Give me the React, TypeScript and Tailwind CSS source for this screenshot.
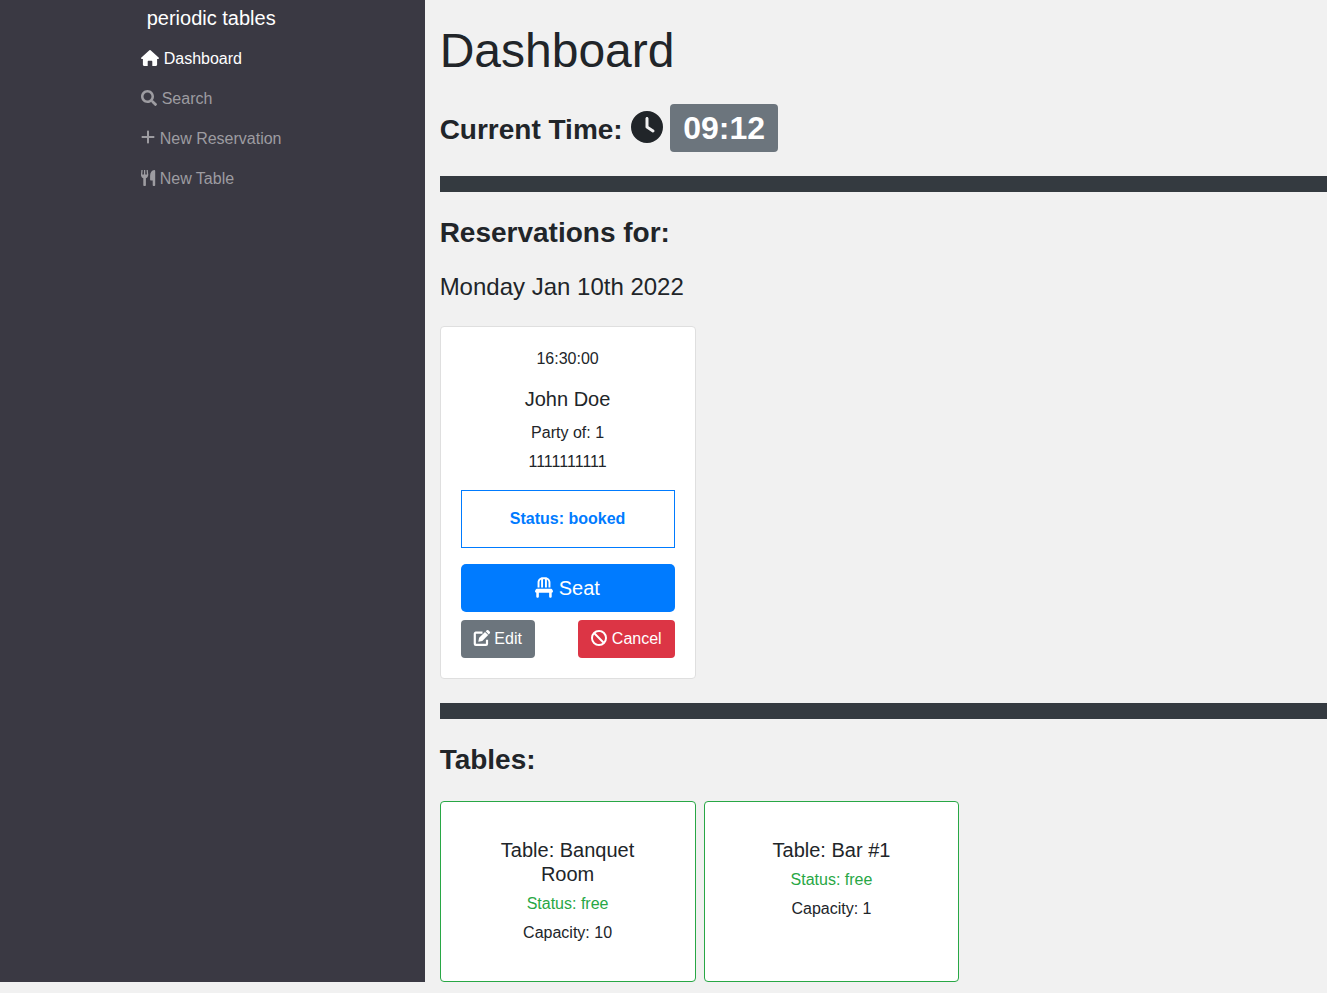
import { FaPlus, FaClock, FaChair, FaBan } from "react-icons/fa6";
import { FaSearch } from "react-icons/fa";
import type { ReactNode } from "react";

function HouseIcon() {
  return (
    <svg viewBox="0 0 18 16" className="h-4 w-[18px]" fill="currentColor">
      <path d="M8.4.3a1 1 0 0 1 1.2 0l8 7.1c.8.7.3 1.6-.6 1.6h-.9v5.8c0 .7-.5 1.2-1.2 1.2h-3.6v-4.2c0-.6-.4-1-1-1H7.7c-.6 0-1 .4-1 1V16H3.1c-.7 0-1.2-.5-1.2-1.2V9H1C.1 9-.4 8.100.4 7.400Z" />
    </svg>
  );
}

function UtensilsIcon() {
  return (
    <svg viewBox="0 0 15 16" className="-mr-px h-4 w-[15px]" fill="none" stroke="currentColor">
      <path d="M1 .3 .6 5M3.600.3V6M6.200.3 6.600 5" strokeWidth="1.300" strokeLinecap="round" />
      <path d="M0 4.500h7.200c0 2-.8 3.300-2.300 3.800V15c0 .6-.4 1-1 1h-.6c-.6 0-1-.4-1-1V8.300C.8 7.800 0 6.500 0 4.500Z" fill="currentColor" stroke="none" />
      <path d="M13.300 0c.6 0 .9.4.9 1v14c0 .6-.4 1-1 1h-.5c-.6 0-1-.4-1-1v-4.600h-1.600c-.6 0-1-.4-1-1V5.500C9.100 2.500 10.800.4 13.300 0Z" fill="currentColor" stroke="none" />
    </svg>
  );
}

function EditIcon() {
  return (
    <svg viewBox="0 0 18 16" className="mb-0.5 h-4 w-[18px]" fill="none">
      <path d="M9.500 2.700H2.800A1 1 0 0 0 1.800 3.700V13.900a1 1 0 0 0 1 1H13a1 1 0 0 0 1-1V9.700" stroke="currentColor" strokeWidth="2.200" />
      <path d="m5.300 11.800.8-4 5.900-5.900 3.200 3.200-5.900 5.900ZM12.700 1.300l.8-.8a1.600 1.600 0 0 1 2.200 0l.9.9a1.600 1.600 0 0 1 0 2.200l-.8.8Z" fill="currentColor" />
    </svg>
  );
}

function NavItem({ icon, label, active }: { icon: ReactNode; label: string; active?: boolean }) {
  return (
    <li className={active ? "flex h-10 items-center text-white" : "flex h-10 items-center text-[#9d9ca1]"}>
      {icon}
      <span className="ml-[4.5px] pt-0.5">{label}</span>
    </li>
  );
}

function TableCard({ name, capacity }: { name: string; capacity: number }) {
  return (
    <article className="w-[255.9px] rounded border border-[#28a745] bg-white px-10 pt-9 text-center">
      <h5 className="mb-1.5 text-xl leading-6">{`Table: ${name}`}</h5>
      <p className="mb-[5px] leading-6 text-[#28a745]">Status: free</p>
      <p className="leading-6">{`Capacity: ${capacity}`}</p>
    </article>
  );
}

export default function App() {
  return (
    <div className="flex h-[993px] w-full overflow-hidden bg-[#f1f1f1] font-['Liberation_Sans',sans-serif] text-base text-[#212529]">
      <nav className="h-[982px] w-[424.64px] shrink-0 bg-[#3a3943] pl-[141.2px]">
        <div className="pt-[3px] pl-[5.5px] text-xl leading-[30px] text-white">periodic tables</div>
        <ul className="pt-[5px]">
          <NavItem active icon={<HouseIcon />} label="Dashboard" />
          <NavItem icon={<FaSearch className="size-4" />} label="Search" />
          <NavItem icon={<FaPlus className="mb-0.5 h-4 w-3.5" />} label="New Reservation" />
          <NavItem icon={<UtensilsIcon />} label="New Table" />
        </ul>
      </nav>
      <main className="min-w-0 flex-1 pl-[15px]">
        <h1 className="pt-[22px] text-5xl leading-[58px]">Dashboard</h1>
        <h3 className="mt-6 flex h-12 items-center text-[28px] font-bold">
          <span className="pt-[3px]">Current Time:</span>
          <FaClock className="mr-[7.2px] mb-[2px] ml-[8.2px] size-8" />
          <span className="flex h-12 w-[108px] items-center justify-center rounded bg-[#6c757d] text-[32px] text-white">09:12</span>
        </h3>
        <div className="mt-6 h-4 bg-[#343a40]" />
        <h3 className="mt-6 text-[28px] leading-[34px] font-bold">Reservations for:</h3>
        <h4 className="mt-[22px] text-2xl leading-[30px]">Monday Jan 10th 2022</h4>
        <article className="mt-6 h-[353px] w-[255.9px] rounded border border-[#dfdfdf] bg-white p-5 text-center">
          <p className="leading-6">16:30:00</p>
          <h5 className="mt-4 text-xl leading-6">John Doe</h5>
          <p className="mt-2.5 leading-6">Party of: 1</p>
          <p className="mt-[5px] leading-6">1111111111</p>
          <p className="mt-4 flex h-[58px] items-center justify-center border border-[#007bff] font-bold text-[#007bff]">Status: booked</p>
          <button className="mt-4 flex h-12 w-full items-center justify-center gap-[5.5px] rounded-[5px] bg-[#007bff] text-xl text-white"><FaChair className="mb-px h-[21px] w-[18px]" />Seat</button>
          <div className="mt-2 flex justify-between text-white">
            <button className="flex h-[38px] w-[74px] items-center justify-center gap-[3px] rounded bg-[#6c757d]"><EditIcon />Edit</button>
            <button className="flex h-[38px] w-[97px] items-center justify-center gap-[4.5px] rounded bg-[#dc3545] pl-px"><FaBan className="mb-0.5" />Cancel</button>
          </div>
        </article>
        <div className="mt-6 h-4 bg-[#343a40]" />
        <h3 className="mt-6 text-[28px] leading-[34px] font-bold">Tables:</h3>
        <div className="mt-6 flex h-[181px] gap-2">
          <TableCard name="Banquet Room" capacity={10} />
          <TableCard name="Bar #1" capacity={1} />
        </div>
      </main>
    </div>
  );
}
